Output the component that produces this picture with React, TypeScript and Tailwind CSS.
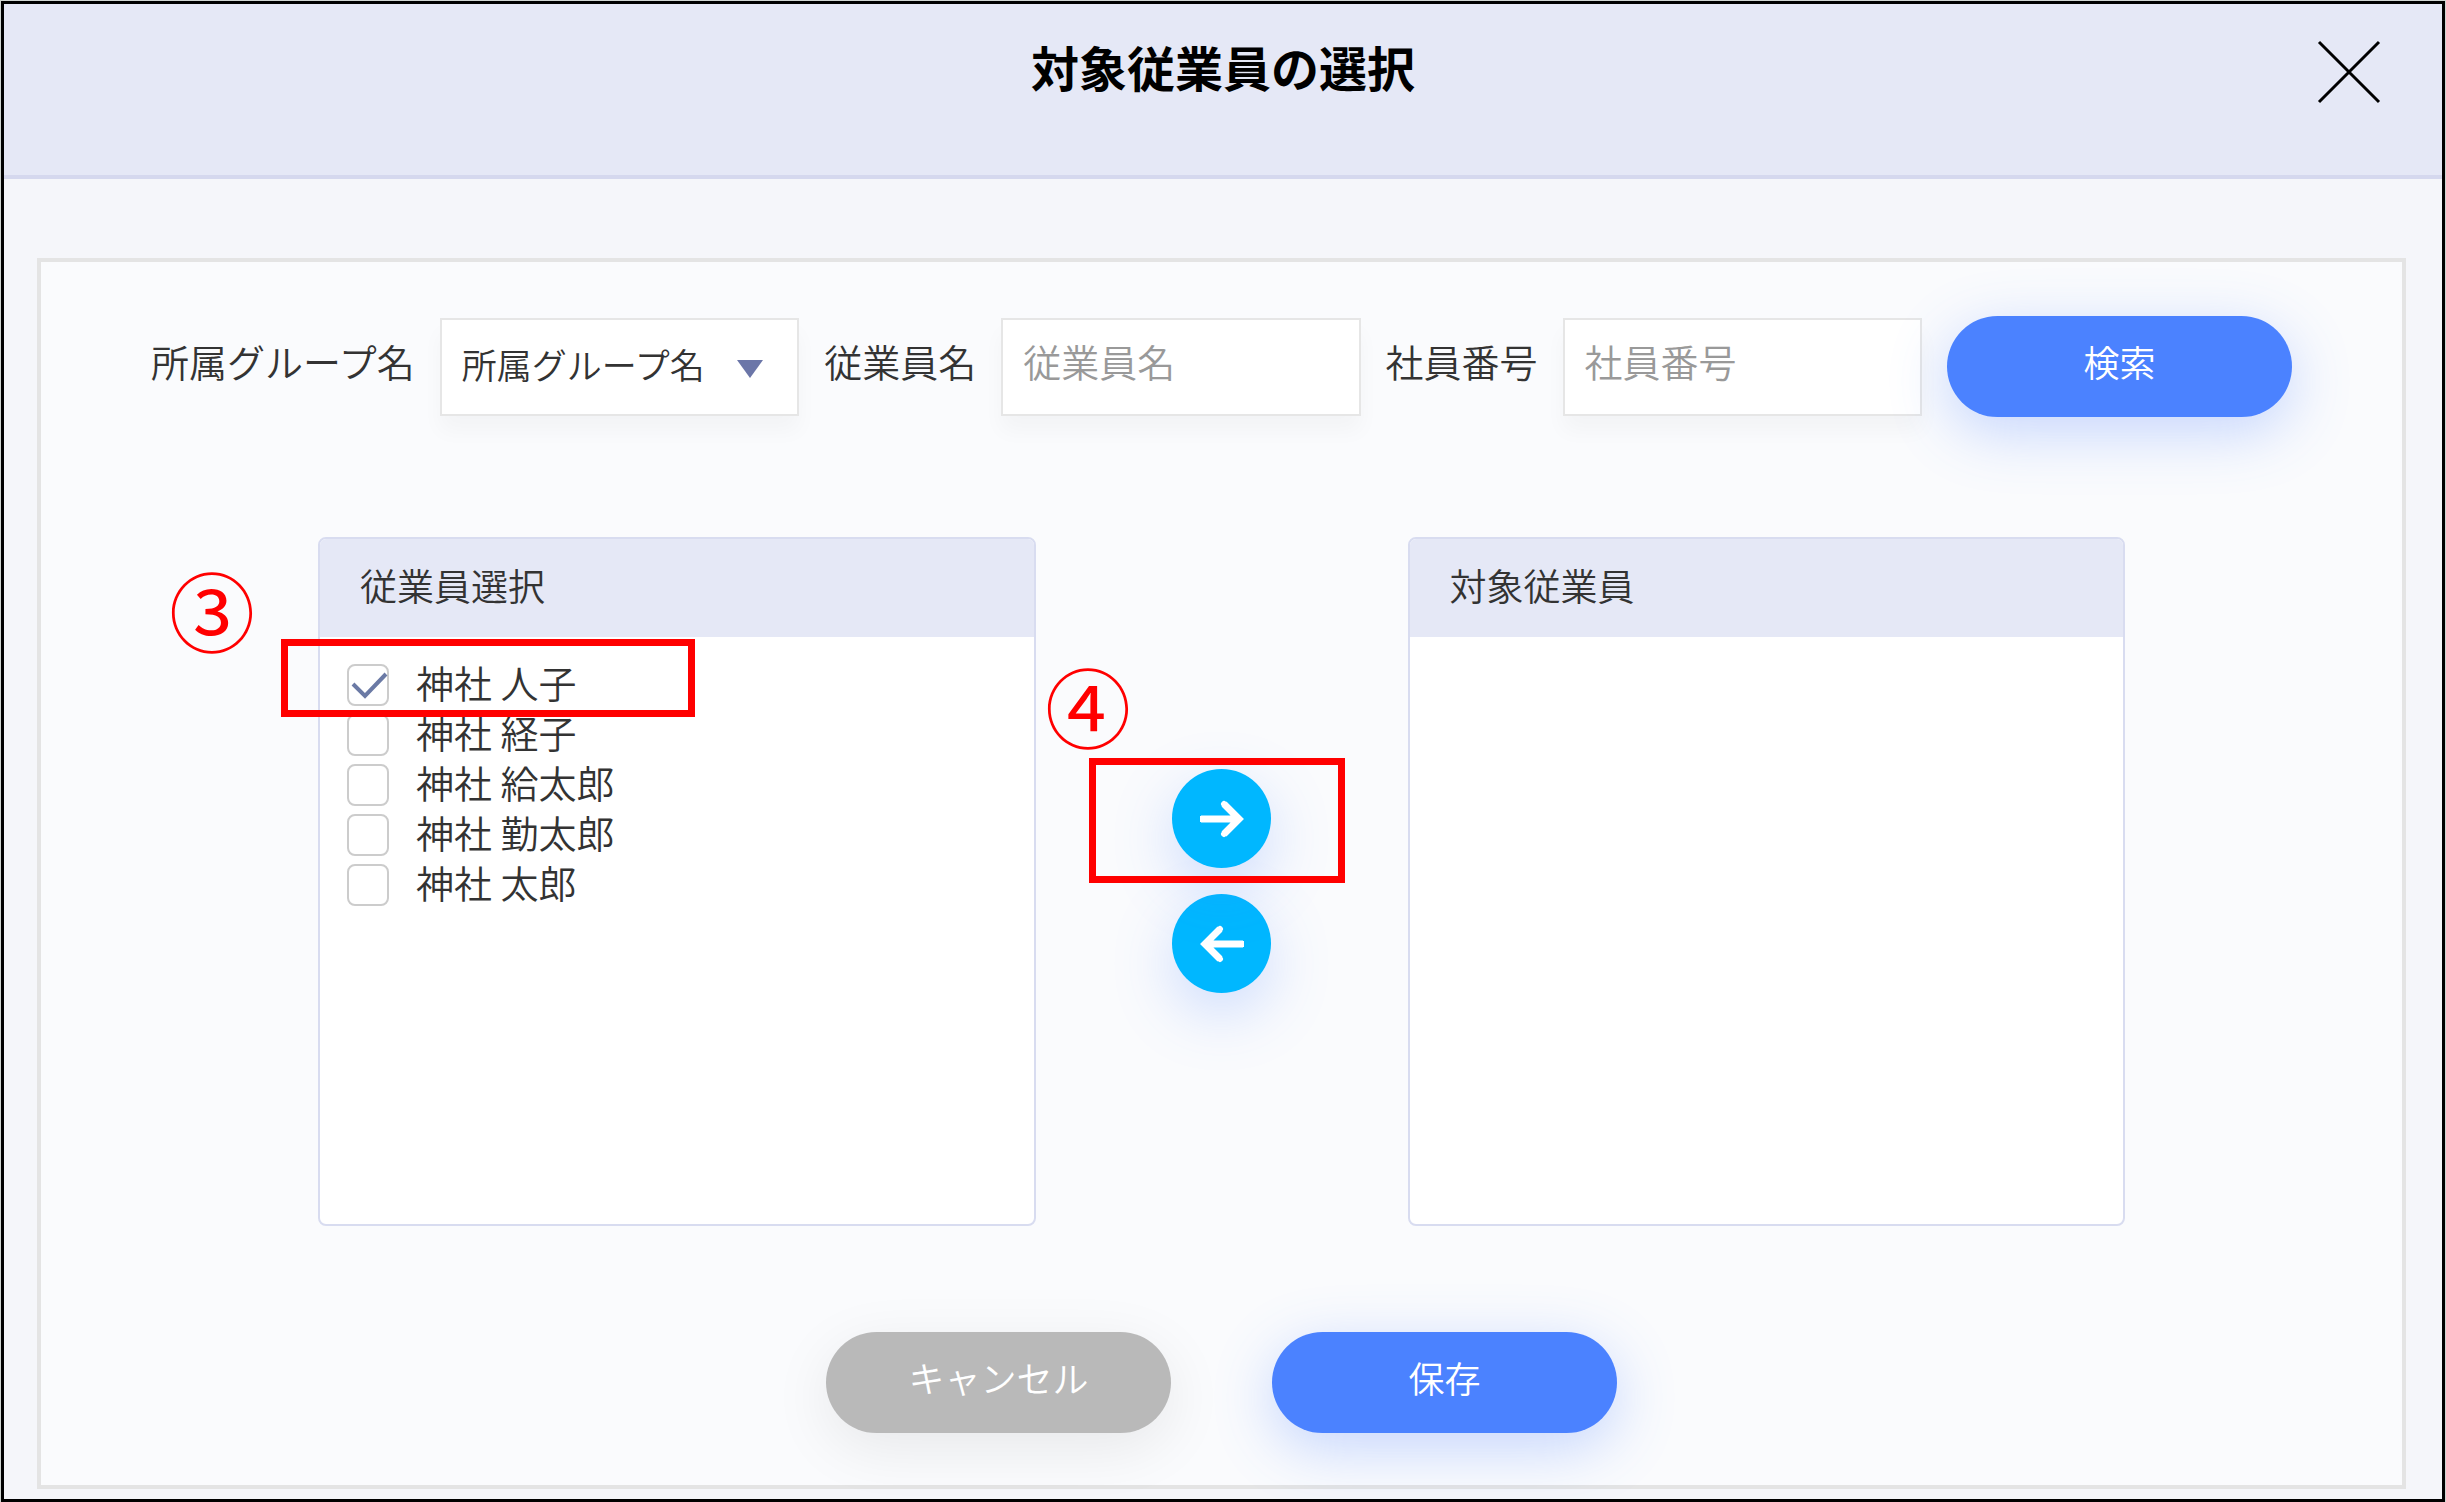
import { useState } from 'react';
import type { ReactNode } from 'react';

const EMPLOYEES = ['神社 人子', '神社 経子', '神社 給太郎', '神社 勤太郎', '神社 太郎'];

const FIELD =
  'h-[98px] w-full rounded-none border-2 border-[#e6e6e6] bg-white px-5 text-[#333333] shadow-[0_15px_20px_rgba(0,0,0,0.03)] outline-none';

interface ArrowButtonProps {
  label: string;
  path: string;
}

function ArrowButton({ label, path }: ArrowButtonProps) {
  return (
    <button
      type="button"
      aria-label={label}
      className="flex size-[99px] items-center justify-center rounded-full bg-[#00b7ff] shadow-[0_20px_60px_rgba(75,130,255,0.25)]"
    >
      <svg viewBox="0 0 44 40" className="h-10 w-11" fill="none" stroke="white" strokeWidth="7">
        <path d={path} />
        <path d={path} strokeLinecap="round" strokeLinejoin="round" strokeWidth="6" />
      </svg>
    </button>
  );
}

interface EmployeeListProps {
  title: string;
  children?: ReactNode;
}

function EmployeeList({ title, children }: EmployeeListProps) {
  return (
    <section className="h-[689px] min-w-0 flex-1 rounded-lg border-2 border-[#d8dcf0] bg-white">
      <h2 className="flex h-[98px] items-center rounded-t-md bg-[#e5e8f6] px-10 pb-1 text-[37px] font-[350] text-[#333333]">
        {title}
      </h2>
      {children}
    </section>
  );
}

export default function App() {
  const [selected, setSelected] = useState<string[]>([EMPLOYEES[0]]);

  const toggle = (name: string) => {
    setSelected((prev) => (prev.includes(name) ? prev.filter((n) => n !== name) : [...prev, name]));
  };

  return (
    <div className="bg-[#d0d5d2] p-px font-['Noto_Sans_CJK_JP',sans-serif]">
      <div className="border-[3px] border-black bg-[#f5f6fa]">
        {/* Header */}
        <header className="flex h-[175px] items-start border-b-4 border-[#d5d8ee] bg-[#e5e8f6] px-[61px] pt-7">
          <div className="w-16" />
          <h1 className="flex-1 text-center text-5xl leading-[68px] font-bold text-black">対象従業員の選択</h1>
          <button type="button" aria-label="閉じる" className="flex h-20 w-16 items-center justify-center">
            <svg viewBox="0 0 64 64" className="size-16" stroke="black" strokeWidth="3">
              <path d="M2 2 L62 62 M62 2 L2 62" />
            </svg>
          </button>
        </header>

        <main className="mt-[79px] mr-9 mb-[10px] ml-[33px] border-4 border-[#e4e4e4] bg-[#fafbfd] pt-[54px] pb-[52px]">
          {/* Search */}
          <form className="flex items-center gap-[25px] px-[110px] text-[38px] font-[350] text-[#333333]">
            <label htmlFor="group" className="pb-3">所属グループ名</label>
            <div className="relative min-w-0 flex-1">
              <select id="group" className={`${FIELD} appearance-none pb-1 text-[35px]`}>
                <option>所属グループ名</option>
              </select>
              <svg viewBox="0 0 26 18" className="pointer-events-none absolute top-[42px] right-9 h-[18px] w-[26px]">
                <path d="M0 0 H26 L13 18 Z" fill="#6b76a8" />
              </svg>
            </div>
            <label htmlFor="name" className="pb-3">従業員名</label>
            <div className="min-w-0 flex-1">
              <input id="name" type="text" placeholder="従業員名" className={`${FIELD} pb-3 placeholder:text-[#999999]`} />
            </div>
            <label htmlFor="number" className="pb-3">社員番号</label>
            <div className="min-w-0 flex-1">
              <input id="number" type="text" placeholder="社員番号" className={`${FIELD} pb-3 placeholder:text-[#999999]`} />
            </div>
            <button
              type="button"
              className="h-[101px] w-[345px] rounded-full bg-[#4b82ff] pb-3 text-4xl text-white shadow-[0_15px_60px_rgba(75,130,255,0.3)]"
            >
              検索
            </button>
          </form>

          {/* Lists */}
          <div className="mt-[120px] flex px-[277px]">
            <EmployeeList title="従業員選択">
              <ul className="relative px-[27px] pt-[23px] text-[38px] font-[350] text-[#333333]">
                {EMPLOYEES.map((name) => (
                  <li key={name}>
                    <label className="flex h-[50px] items-center gap-[27px]">
                      <span className="relative size-[42px]">
                        <input
                          type="checkbox"
                          checked={selected.includes(name)}
                          onChange={() => toggle(name)}
                          className="peer block size-[42px] appearance-none rounded-lg border-2 border-[#cccccc] bg-white"
                        />
                        <svg
                          viewBox="0 0 42 42"
                          className="pointer-events-none absolute inset-0 hidden peer-checked:block"
                          fill="none"
                          stroke="#6b7aa5"
                          strokeWidth="4"
                        >
                          <path d="M6 20 L18 32 L39 10" />
                        </svg>
                      </span>
                      <span className="pb-2">{name}</span>
                    </label>
                  </li>
                ))}
                <li aria-hidden="true" className="pointer-events-none absolute top-[2px] -left-[39px] h-[78px] w-[414px] border-[7px] border-[#ff0000]" />
                <li className="pointer-events-none absolute -top-[71px] -left-[151px] text-[86px] leading-[86px] font-normal text-[#ff0000]">③</li>
              </ul>
            </EmployeeList>

            <div className="flex w-[372px] flex-col items-center gap-[26px] pt-[232px]">
              <div className="relative">
                <ArrowButton label="追加" path="M1 20 H36 M24 5 L39 20 L24 35" />
                <div className="pointer-events-none absolute -top-[11px] -left-[83px] h-[125px] w-[256px] border-[7px] border-[#ff0000]" />
                <span className="pointer-events-none absolute -top-[107px] -left-[127px] text-[86px] leading-[86px] text-[#ff0000]">④</span>
              </div>
              <ArrowButton label="削除" path="M43 20 H8 M20 5 L5 20 L20 35" />
            </div>

            <EmployeeList title="対象従業員" />
          </div>

          {/* Actions */}
          <div className="mt-[106px] flex justify-center gap-[101px] text-4xl font-[350] text-white">
            <button
              type="button"
              className="h-[101px] w-[345px] rounded-full bg-[#b9b9b9] pb-3 shadow-[0_15px_60px_rgba(0,0,0,0.08)]"
            >
              キャンセル
            </button>
            <button
              type="button"
              className="h-[101px] w-[345px] rounded-full bg-[#4b82ff] pb-3 shadow-[0_15px_60px_rgba(75,130,255,0.3)]"
            >
              保存
            </button>
          </div>
        </main>
      </div>
    </div>
  );
}
